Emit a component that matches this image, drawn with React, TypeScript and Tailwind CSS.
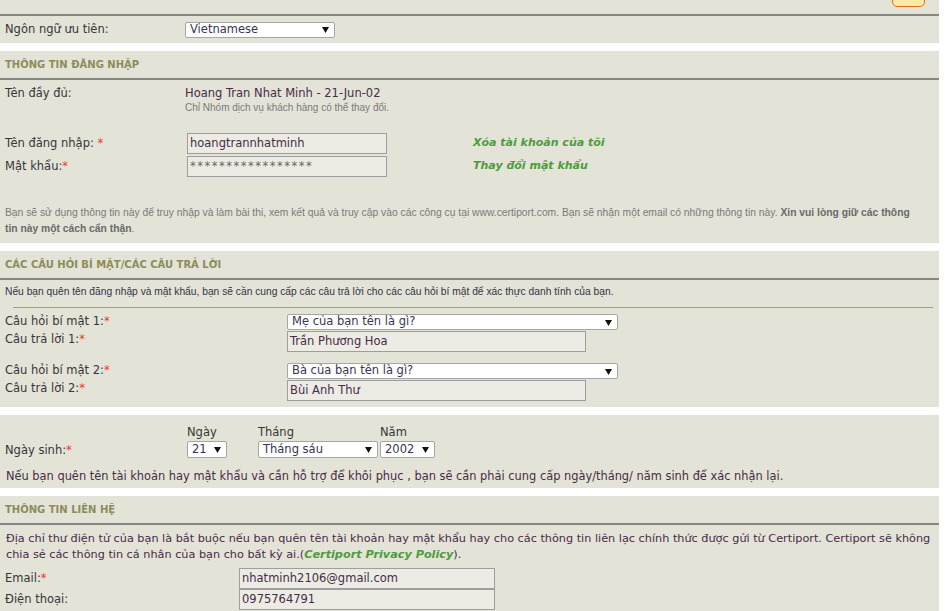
import React from 'react';

const MAIN = "font-['DejaVu_Sans',sans-serif] text-[11.5px]";
const SMALL = "font-['Liberation_Sans',Arial,sans-serif] text-[10px]";
const LABEL = 'text-[#363636]';
const VALUE = 'text-[#472c47]';

const Star: React.FC = () => <span className="text-[#f0372b]">*</span>;

const Arrow: React.FC = () => (
  <svg width="7" height="7" viewBox="0 0 7 7" className="shrink-0">
    <path d="M0 1h7L3.5 7z" fill="#111" />
  </svg>
);

interface BoxProps {
  value: string;
  className?: string;
}

const FakeSelect: React.FC<BoxProps> = ({ value, className = '' }) => (
  <div
    className={`flex items-center justify-between bg-white border border-[#a6a6a6] rounded-[2px] pl-[4px] pr-[5px] leading-none text-[#3a3450] ${className}`}
  >
    <span>{value}</span>
    <Arrow />
  </div>
);

const Field: React.FC<BoxProps> = ({ value, className = '' }) => (
  <div
    className={`flex items-center bg-[#ecebe4] border border-[#9e9e9e] px-[2px] leading-none ${VALUE} ${className}`}
  >
    {value}
  </div>
);

const SectionHead: React.FC<{ title: string }> = ({ title }) => (
  <>
    <div className="h-[27px] flex items-center pl-[5px] font-['DejaVu_Sans',sans-serif] font-bold text-[10px] text-[#8c8c5a]">
      {title}
    </div>
    <div className="h-[2px] bg-[#858585]" />
  </>
);

const Panel: React.FC<{ children: React.ReactNode; className?: string }> = ({ children, className = '' }) => (
  <section className={`w-[939px] bg-[#e4e3d8] ${className}`}>{children}</section>
);

export default function App() {
  return (
    <div className={`min-h-[611px] bg-white flex flex-col gap-[8px] overflow-hidden ${MAIN}`}>
      {/* language */}
      <Panel>
        <div className="h-[14px] flex justify-end pr-[14px]">
          <div className="w-[33px] h-[20px] -mt-[13px] border border-[#e2711d] bg-[#f9eaa6] rounded-b-[5px] text-center font-bold text-[11px] leading-[15px] text-[#d0602a]">
            Lưu
          </div>
        </div>
        <div className="h-[2px] bg-[#858585]" />
        <div className="h-[27px] flex items-center">
          <div className={`w-[185px] pl-[5px] ${LABEL}`}>Ngôn ngữ ưu tiên:</div>
          <FakeSelect value="Vietnamese" className="w-[150px] h-[16px]" />
        </div>
      </Panel>

      {/* login info */}
      <Panel className="pb-[6px]">
        <SectionHead title="THÔNG TIN ĐĂNG NHẬP" />
        <div className="mt-[6px] flex">
          <div className={`w-[185px] pl-[5px] leading-[14px] ${LABEL}`}>Tên đầy đủ:</div>
          <div>
            <div className={`leading-[14px] ${VALUE}`}>Hoang Tran Nhat Minh - 21-Jun-02</div>
            <div className={`mt-[1px] leading-[14px] text-[#7a7a7a] ${SMALL}`}>
              Chỉ Nhóm dịch vụ khách hàng có thể thay đổi.
            </div>
          </div>
        </div>
        <div className="mt-[18px] flex items-center h-[21px]">
          <div className={`w-[187px] pl-[5px] ${LABEL}`}>
            Tên đăng nhập: <Star />
          </div>
          <Field value="hoangtrannhatminh" className="w-[200px] h-[21px]" />
          <div className="ml-[86px] font-bold italic text-[11px] text-[#4d9c3c]">Xóa tài khoản của tôi</div>
        </div>
        <div className="mt-[2px] flex items-center h-[21px]">
          <div className={`w-[187px] pl-[5px] ${LABEL}`}>
            Mật khẩu:<Star />
          </div>
          <Field value="*****************" className="w-[200px] h-[21px] tracking-[1.5px] text-[#666]" />
          <div className="ml-[86px] font-bold italic text-[11px] text-[#4d9c3c]">Thay đổi mật khẩu</div>
        </div>
        <p
          className={`mt-[28px] pl-[5px] leading-[16px] text-[#7a7a7a] whitespace-nowrap font-['Liberation_Sans',Arial,sans-serif] text-[10.3px]`}
        >
          Bạn sẽ sử dụng thông tin này để truy nhập và làm bài thi, xem kết quả và truy cập vào các công cụ tại
          www.certiport.com. Bạn sẽ nhận một email có những thông tin này.{' '}
          <b className="text-[#6a6a6a]">Xin vui lòng giữ các thông</b>
          <br />
          <b className="text-[#6a6a6a]">tin này một cách cẩn thận</b>.
        </p>
      </Panel>

      {/* secret questions */}
      <Panel className="pb-[6px]">
        <SectionHead title="CÁC CÂU HỎI BÍ MẬT/CÁC CÂU TRẢ LỜI" />
        <div
          className={`mt-[5px] pl-[5px] leading-[14px] text-[#333344] font-['Liberation_Sans',Arial,sans-serif] text-[10.25px]`}
        >
          Nếu bạn quên tên đăng nhập và mật khẩu, bạn sẽ cần cung cấp các câu trả lời cho các câu hỏi bí mật để xác
          thực danh tính của bạn.
        </div>
        <div className="mt-[8px] ml-[13px] w-[920px] h-px bg-[#9a9a9a]" />
        <div className="mt-[6px] flex items-center h-[16px]">
          <div className={`w-[287px] pl-[5px] ${LABEL}`}>
            Câu hỏi bí mật 1:<Star />
          </div>
          <FakeSelect value="Mẹ của bạn tên là gì?" className="w-[331px] h-[16px]" />
        </div>
        <div className="mt-[1px] flex items-start">
          <div className={`w-[287px] pl-[5px] leading-[16px] ${LABEL}`}>
            Câu trả lời 1:<Star />
          </div>
          <Field value="Trần Phương Hoa" className="w-[299px] h-[21px]" />
        </div>
        <div className="mt-[11px] flex items-center h-[16px]">
          <div className={`w-[287px] pl-[5px] ${LABEL}`}>
            Câu hỏi bí mật 2:<Star />
          </div>
          <FakeSelect value="Bà của bạn tên là gì?" className="w-[331px] h-[16px]" />
        </div>
        <div className="mt-[1px] flex items-start">
          <div className={`w-[287px] pl-[5px] leading-[16px] ${LABEL}`}>
            Câu trả lời 2:<Star />
          </div>
          <Field value="Bùi Anh Thư" className="w-[299px] h-[21px]" />
        </div>
      </Panel>

      {/* birthday */}
      <Panel className="pt-[10px] pb-[4px]">
        <div className={`ml-[187px] flex leading-[14px] ${LABEL}`}>
          <div className="w-[71px]">Ngày</div>
          <div className="w-[122px]">Tháng</div>
          <div>Năm</div>
        </div>
        <div className="mt-[2px] flex items-center h-[17px]">
          <div className={`w-[187px] pl-[5px] pt-[2px] ${LABEL}`}>
            Ngày sinh:<Star />
          </div>
          <FakeSelect value="21" className="w-[40px] h-[17px]" />
          <FakeSelect value="Tháng sáu" className="ml-[31px] w-[120px] h-[17px]" />
          <FakeSelect value="2002" className="ml-[2px] w-[55px] h-[17px]" />
        </div>
        <p className={`mt-[10px] pl-[6px] leading-[16px] text-[11.4px] ${VALUE}`}>
          Nếu bạn quên tên tài khoản hay mật khẩu và cần hỗ trợ để khôi phục , bạn sẽ cần phải cung cấp ngày/tháng/
          năm sinh để xác nhận lại.
        </p>
      </Panel>

      {/* contact */}
      <Panel className="pb-[10px]">
        <SectionHead title="THÔNG TIN LIÊN HỆ" />
        <p className={`mt-[6px] pl-[6px] leading-[16px] whitespace-nowrap text-[11.25px] ${VALUE}`}>
          Địa chỉ thư điện tử của bạn là bắt buộc nếu bạn quên tên tài khoản hay mật khẩu hay cho các thông tin liên
          lạc chính thức được gửi từ Certiport. Certiport sẽ không
          <br />
          chia sẻ các thông tin cá nhân của bạn cho bất kỳ ai.(
          <b className="italic text-[#4d9c3c]">Certiport Privacy Policy</b>).
        </p>
        <div className="mt-[5px] flex items-center h-[21px]">
          <div className={`w-[239px] pl-[5px] ${LABEL}`}>
            Email:<Star />
          </div>
          <Field value="nhatminh2106@gmail.com" className="w-[256px] h-[21px]" />
        </div>
        <div className="flex items-center h-[21px]">
          <div className={`w-[239px] pl-[5px] ${LABEL}`}>Điện thoại:</div>
          <Field value="0975764791" className="w-[256px] h-[21px]" />
        </div>
      </Panel>
    </div>
  );
}
